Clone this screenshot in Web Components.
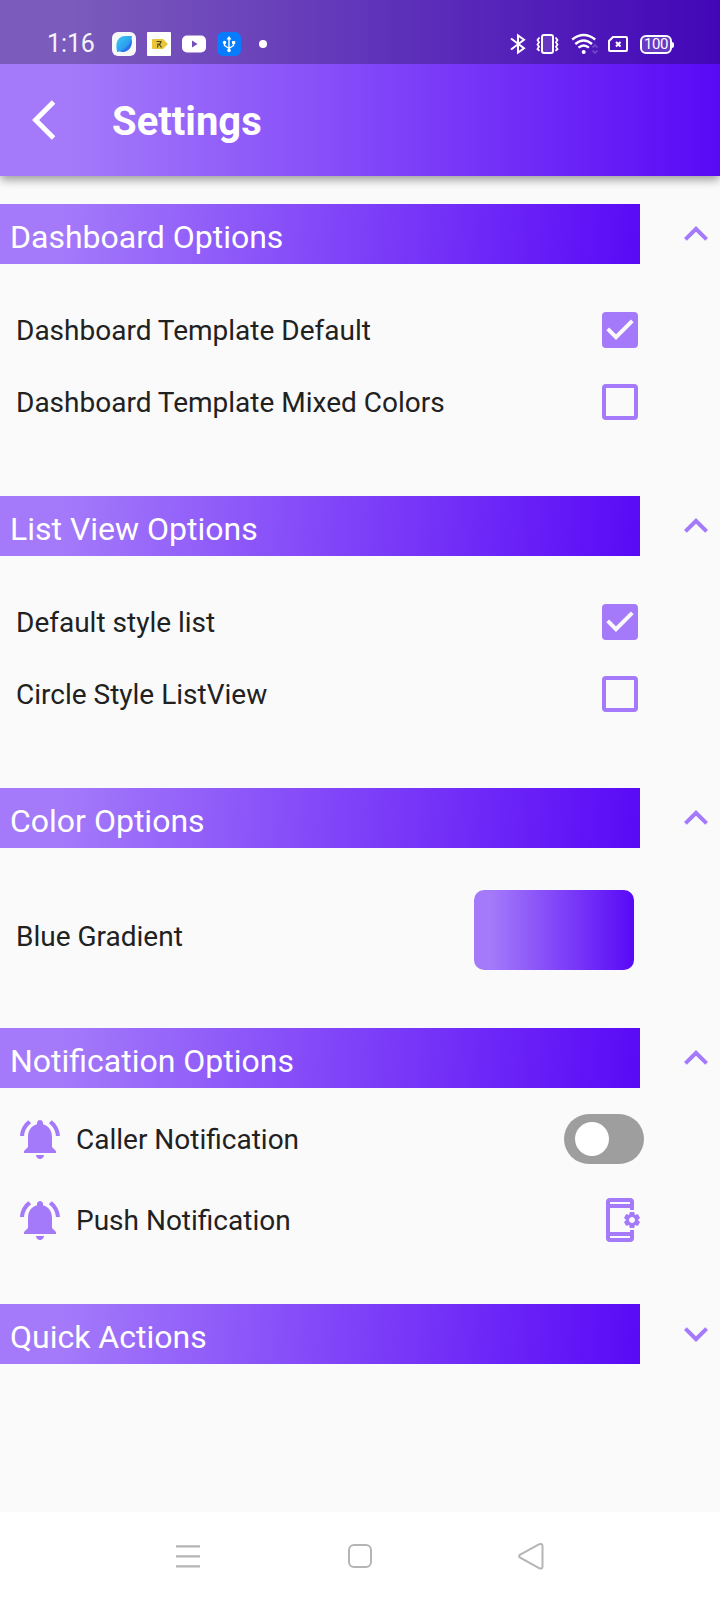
<!DOCTYPE html>
<html lang="en">
<head>
<meta charset="utf-8">
<title>Settings</title>
<style>
html,body{margin:0;padding:0}
body{width:720px;height:1600px;overflow:hidden;background:#fafafa;font-family:Roboto,"Liberation Sans",sans-serif;color:#212121;
--accent:#a47afa;--from:#a47afa;--to:#5909f6}
</style>
</head>
<body>
<settings-screen></settings-screen>
<script>
const define = (name, html) => customElements.define(name, class extends HTMLElement {
  constructor() {
    super();
    this.attachShadow({mode: 'open'}).innerHTML = html;
  }
});

define('status-bar', `
<style>
:host{display:flex;height:24px;padding:32px 47px 8px 47px;align-items:center;background:rgba(0,0,0,.25);color:#fff}
svg{display:block;flex:none}
.time{box-sizing:border-box;font-size:25px;line-height:26px;width:65px;letter-spacing:-.1px;opacity:.93}
.left{display:flex;gap:11px;flex:1;align-items:center}
.bt{margin-right:10px}.vib{margin-right:11px}.wifi{margin-right:9px}.sim{margin-right:12px}
.battery{box-sizing:border-box;width:32px;height:19px;margin-right:1px;border:2px solid #fff;border-radius:6px;background:rgba(255,255,255,.18);font:400 15px/15px Roboto,sans-serif;letter-spacing:-.5px;display:flex;justify-content:center;position:relative}
.battery::after{content:"";position:absolute;right:-4px;top:5px;width:2px;height:6px;background:#fff;border-radius:0 2px 2px 0}
</style>
<span class="time">1:16</span>
<div class="left">
<svg width="24" height="24"><defs><linearGradient id="g" x1="0" y1="0" x2="1" y2="1"><stop offset=".1" stop-color="#38c6f4"/><stop offset=".6" stop-color="#2d9df0"/><stop offset="1" stop-color="#2d62ee"/></linearGradient></defs><rect width="24" height="24" rx="6" fill="#f8f8fa"/><path d="M5 20C5 18 4 16 4.500 12Q6 4 13 4H20Q19 6 20 9C20 16 16 20 10 20Q7 19 5 20Z" fill="url(#g)"/><path d="M9 19C14 17 17 13 19.700 8C20 15 16 20 10 20Z" fill="#2b68ed" opacity=".75"/></svg>
<svg width="24" height="24"><rect width="24" height="24" rx="1" fill="#fff"/><path d="M6 7H16L21 12L16 17H6Q5 17 5 16V8Q5 7 6 7Z" fill="#e9c638"/><path d="M9.500 9.500H14L13 12H11L10.500 15.500M12 12L14.500 15.500" fill="none" stroke="#4b4322" stroke-width="1.200"/></svg>
<svg width="24" height="24"><rect y="3.500" width="24" height="17" rx="5" fill="#fff"/><path d="M10 8.500V15.500L15.500 12Z" fill="#7150b8"/></svg>
<svg width="24" height="24"><rect width="24" height="24" rx="6" fill="#087cff"/><path d="M12 6V19M12 16.500L7.500 13.500V10M12 16.500L16.500 13.500V10" fill="none" stroke="#fff" stroke-width="1.400"/><path d="M12 4L14.500 7.500H9.500Z" fill="#fff"/><circle cx="7.500" cy="10.500" r="1.700" fill="#fff"/><rect x="15" y="9" width="3.200" height="3" fill="#fff"/><circle cx="12" cy="18.500" r="1.800" fill="#fff"/></svg>
<svg width="22" height="24"><circle cx="11" cy="12" r="4" fill="#fff"/></svg>
</div>
<svg class="bt" width="16" height="24" fill="none" stroke="#fff" stroke-width="2"><path d="M1 6.500L14 16.300L8 20.500V3.500L14 7.700L1 17.500"/></svg>
<svg class="vib" width="24" height="24" fill="none" stroke="#fff" stroke-width="2"><rect x="6" y="3" width="11" height="18" rx="2" fill="#fff" fill-opacity=".12"/><path d="M3.500 5.500L1.500 8L3 10.300L1.500 12.500L3 14.800L1.500 17L3.500 18.800M19.500 5.500L21.500 8L20 10.300L21.500 12.500L20 14.800L21.500 17L19.500 18.800" stroke-width="1.800"/></svg>
<svg class="wifi" width="28" height="24" fill="none" stroke="#fff" stroke-width="2.400"><path d="M1.200 7.500Q12.700 -1.300 24.200 7.500M4.300 12Q12.700 5 21 12M7.500 15.700Q12.700 11.300 17.900 15.700"/><circle cx="12.700" cy="20" r="2" fill="#fff" stroke="none"/><path d="M21.500 15.500L24 13L26.500 15.500M21.500 18.500L24 21L26.500 18.500" stroke="#6e46c4" stroke-width="1.800"/></svg>
<svg class="sim" width="20" height="24" fill="none" stroke="#fff" stroke-width="2"><path d="M5 5H18Q19 5 19 6V18Q19 19 18 19H2Q1 19 1 18V9Z"/><path d="M8 10L12.500 14.500M12.500 10L8 14.500"/></svg>
<div class="battery">100</div>`);

define('app-bar', `
<style>
:host{display:block;position:relative;background:linear-gradient(90deg,var(--from) 10%,var(--to));box-shadow:0 5px 8px -1px rgba(0,0,0,.3),0 3px 12px rgba(0,0,0,.1)}
.bar{height:112px;display:flex;align-items:center;padding-left:32px;color:#fff}
svg{display:block;margin-right:32px}
h1{margin:0;padding-top:3px;font-size:40px;line-height:48px;font-weight:700}
</style>
<status-bar></status-bar>
<div class="bar"><svg width="48" height="48" viewBox="0 0 24 24" fill="#fff"><path d="M11.670 3.870L9.900 2.100 0 12l9.900 9.900 1.770-1.770L3.540 12z"/></svg><h1><slot></slot></h1></div>`);

define('option-section', `
<style>
:host{display:block}
header{display:flex;align-items:center;height:60px}
h2{box-sizing:border-box;margin:0;width:640px;height:60px;padding:5px 0 0 10px;font-size:32px;line-height:56px;font-weight:400;color:#fff;background:linear-gradient(95deg,var(--from) 10%,var(--to))}
svg{display:block;margin-left:32px}
:host([collapsed]) svg{transform:rotate(180deg)}
</style>
<header><h2><slot name="title"></slot></h2><svg width="48" height="48" viewBox="0 0 24 24" fill="var(--accent)"><path d="M12 8l-6 6 1.410 1.410L12 10.830l4.590 4.580L18 14z"/></svg></header>
<slot></slot>`);

define('option-row', `
<style>
:host{display:flex;align-items:center;justify-content:space-between;width:622px;height:72px;padding-left:16px;font-size:28px;line-height:34px}
.label{display:flex;align-items:center;gap:12px}
.text{padding-top:var(--text-drop,2px)}
</style>
<div class="label"><slot name="icon"></slot><span class="text"><slot></slot></span></div><slot name="control"></slot>`);

define('check-box', `
<style>
:host{display:block;box-sizing:border-box;width:36px;height:36px;border:4px solid var(--accent);border-radius:4px}
svg{display:none;margin:-4px}
:host([checked]){background:var(--accent)}
:host([checked]) svg{display:block}
</style>
<svg width="36" height="36" fill="none" stroke="#fafafa" stroke-width="4"><path d="M5.700 16.900L14 25.200L30.300 8.900"/></svg>`);

define('color-swatch', `
<style>:host{display:block;width:160px;height:80px;border-radius:10px;background:linear-gradient(90deg,var(--from) 10%,var(--to))}</style>`);

define('toggle-switch', `
<style>
:host{display:flex;box-sizing:border-box;width:80px;height:50px;border-radius:25px;background:#9e9e9e;padding:8px 11px}
i{width:34px;height:34px;border-radius:50%;background:#fff}
</style><i></i>`);

define('bell-icon', `
<style>:host{display:block}svg{display:block}</style>
<svg width="48" height="48" viewBox="0 0 24 24" fill="var(--accent)"><path d="M7.580 4.080L6.150 2.650C3.750 4.480 2.170 7.300 2.030 10.500h2c.150-2.650 1.510-4.970 3.550-6.420zm12.390 6.420h2c-.150-3.200-1.730-6.020-4.120-7.850l-1.420 1.430c2.020 1.450 3.390 3.770 3.540 6.420zM18 11c0-3.070-1.640-5.640-4.500-6.320V4c0-.830-.670-1.500-1.500-1.500s-1.500.670-1.500 1.500v.680C7.630 5.360 6 7.920 6 11v5l-2 2v1h16v-1l-2-2v-5zm-6 11c.140 0 .270-.010.400-.040.650-.140 1.180-.580 1.440-1.180.100-.240.150-.500.150-.780h-4c.010 1.100.900 2 2.010 2z"/></svg>`);

define('phone-settings-icon', `
<style>:host{display:block}svg{display:block}</style>
<svg width="48" height="48" viewBox="0 0 24 24" fill="var(--accent)"><path fill-rule="evenodd" d="M7 1H17Q19 1 19 3V7H17V6H7V18H17V17H19V21Q19 23 17 23H7Q5 23 5 21V3Q5 1 7 1ZM7 3V4H17V3ZM7 20V21H17V20Z"/><path d="M21.810 12.740l-.820-.630v-.220l.800-.630c.160-.120.200-.340.100-.510l-.850-1.480c-.070-.130-.210-.200-.350-.200-.050 0-.100.010-.150.030l-.950.380c-.080-.050-.110-.070-.190-.110l-.150-1.010c-.030-.210-.200-.360-.400-.360h-1.710c-.200 0-.370.150-.400.340l-.140 1.010c-.030.020-.070.030-.100.050l-.090.060-.950-.380c-.050-.020-.100-.030-.150-.030-.140 0-.270.070-.350.200l-.850 1.480c-.100.170-.060.390.100.510l.800.630v.230l-.800.630c-.160.120-.200.340-.100.510l.850 1.480c.070.130.210.200.350.200.050 0 .100-.010.150-.030l.950-.370c.080.050.120.070.200.110l.150 1.010c.030.200.200.340.400.340h1.710c.200 0 .370-.150.400-.340l.150-1.010c.030-.020.070-.030.100-.050l.090-.060.950.380c.050.020.100.030.150.030.140 0 .270-.070.350-.200l.850-1.480c.090-.170.050-.390-.110-.510zM18 13.500c-.830 0-1.500-.670-1.500-1.500s.670-1.500 1.500-1.500 1.500.670 1.500 1.500-.670 1.500-1.500 1.500z"/></svg>`);

define('nav-bar', `
<style>
:host{display:flex;height:88px;background:#fff;align-items:center;justify-content:space-between;padding:0 175px}
svg{display:block}
.home{margin-left:2px}
</style>
<svg width="26" height="28" stroke="#b5b5b5" stroke-width="2.300"><path d="M1 4.300H25M1 14.300H25M1 24.300H25"/></svg>
<svg class="home" width="26" height="28" fill="none" stroke="#b5b5b5" stroke-width="2"><rect x="2" y="3" width="22" height="22" rx="5"/></svg>
<svg width="28" height="28" fill="none" stroke="#b5b5b5" stroke-width="2"><path d="M3.200 12.700L22.300 2.200Q25.500 1.200 25.500 4V24.500Q25.500 27.300 22.500 26.300L3.200 15.700Q1 14.200 3.200 12.700Z"/></svg>`);

define('settings-screen', `
<style>
:host{display:flex;flex-direction:column;height:1600px}
main{flex:1;padding-top:28px}
.checks{padding:30px 0 58px}
.color{padding:36px 0 52px}
.color option-row{width:618px;height:92px;--text-drop:14px}
.notify{padding:10px 0 44px}
.notify option-row{width:628px;height:81px}
</style>
<app-bar>Settings</app-bar>
<main>
<option-section><span slot="title">Dashboard Options</span><div class="checks">
<option-row>Dashboard Template Default<check-box slot="control" checked></check-box></option-row>
<option-row>Dashboard Template Mixed Colors<check-box slot="control"></check-box></option-row></div></option-section>
<option-section><span slot="title">List View Options</span><div class="checks">
<option-row>Default style list<check-box slot="control" checked></check-box></option-row>
<option-row>Circle Style ListView<check-box slot="control"></check-box></option-row></div></option-section>
<option-section><span slot="title">Color Options</span><div class="color">
<option-row>Blue Gradient<color-swatch slot="control"></color-swatch></option-row></div></option-section>
<option-section><span slot="title">Notification Options</span><div class="notify">
<option-row><bell-icon slot="icon"></bell-icon>Caller Notification<toggle-switch slot="control"></toggle-switch></option-row>
<option-row><bell-icon slot="icon"></bell-icon>Push Notification<phone-settings-icon slot="control"></phone-settings-icon></option-row></div></option-section>
<option-section collapsed><span slot="title">Quick Actions</span></option-section>
</main>
<nav-bar></nav-bar>`);
</script>
</body>
</html>
